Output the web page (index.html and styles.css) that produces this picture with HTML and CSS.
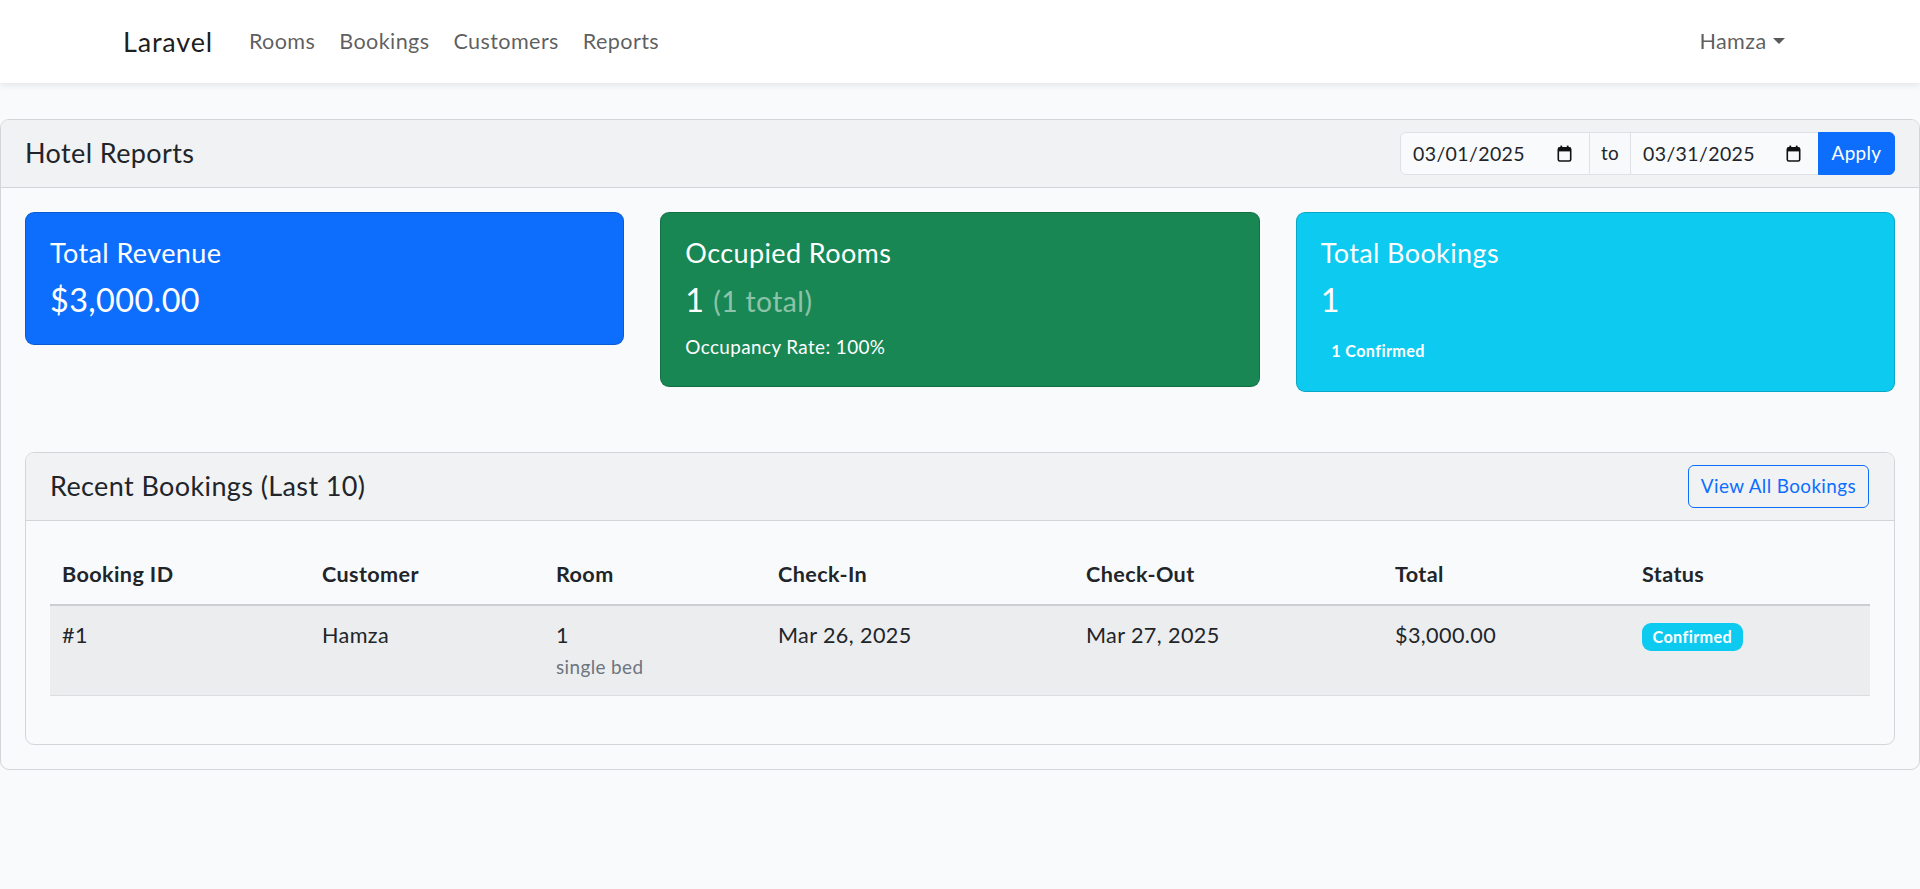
FILE: index.html
```html
<!DOCTYPE html>
<html lang="en">
<head>
<meta charset="utf-8">
<title>Hotel Reports</title>
<link rel="stylesheet" href="styles.css">
</head>
<body>
<nav class="navbar">
  <div class="nav-container">
    <a class="brand" href="#">Laravel</a>
    <ul class="nav-links">
      <li><a class="nav-link" href="#">Rooms</a></li>
      <li><a class="nav-link" href="#">Bookings</a></li>
      <li><a class="nav-link" href="#">Customers</a></li>
      <li><a class="nav-link" href="#">Reports</a></li>
    </ul>
    <div class="nav-user">
      <a class="nav-link dropdown-toggle" href="#">Hamza</a>
    </div>
  </div>
</nav>

<main class="main">
  <div class="card">
    <div class="card-header header-flex">
      <h5 class="header-title">Hotel Reports</h5>
      <form class="date-group">
        <div class="date-input first">
          <span>03/01/2025</span>
          <svg class="cal-icon" width="15" height="17" viewBox="0 0 15 17"><rect x="1.3" y="2.8" width="12.4" height="13.2" rx="1.6" fill="none" stroke="#111" stroke-width="1.6"/><rect x="1.3" y="2.8" width="12.4" height="3.6" fill="#111"/><rect x="3.4" y="0.6" width="1.8" height="3" fill="#111"/><rect x="9.8" y="0.6" width="1.8" height="3" fill="#111"/></svg>
        </div>
        <span class="group-text">to</span>
        <div class="date-input second">
          <span>03/31/2025</span>
          <svg class="cal-icon" width="15" height="17" viewBox="0 0 15 17"><rect x="1.3" y="2.8" width="12.4" height="13.2" rx="1.6" fill="none" stroke="#111" stroke-width="1.6"/><rect x="1.3" y="2.8" width="12.4" height="3.6" fill="#111"/><rect x="3.4" y="0.6" width="1.8" height="3" fill="#111"/><rect x="9.8" y="0.6" width="1.8" height="3" fill="#111"/></svg>
        </div>
        <button type="button" class="btn-apply">Apply</button>
      </form>
    </div>

    <div class="card-body">
      <div class="stats-row">
        <div class="stat-card bg-primary">
          <h5 class="stat-title">Total Revenue</h5>
          <h4 class="stat-value">$3,000.00</h4>
        </div>
        <div class="stat-card bg-success">
          <h5 class="stat-title">Occupied Rooms</h5>
          <h4 class="stat-value spaced">1 <small class="total-muted">(1 total)</small></h4>
          <p class="stat-note">Occupancy Rate: 100%</p>
        </div>
        <div class="stat-card bg-info">
          <h5 class="stat-title">Total Bookings</h5>
          <h4 class="stat-value spaced">1</h4>
          <div class="badge-line"><span class="badge badge-info">1 Confirmed</span></div>
        </div>
      </div>

      <div class="card inner-card">
        <div class="card-header header-flex inner-header">
          <h5 class="header-title">Recent Bookings (Last 10)</h5>
          <a class="btn-outline" href="#">View All Bookings</a>
        </div>
        <div class="card-body">
          <table class="table">
            <colgroup>
              <col class="c-id"><col class="c-cust"><col class="c-room"><col class="c-in"><col class="c-out"><col class="c-total"><col class="c-status">
            </colgroup>
            <thead>
              <tr>
                <th>Booking ID</th>
                <th>Customer</th>
                <th>Room</th>
                <th>Check-In</th>
                <th>Check-Out</th>
                <th>Total</th>
                <th>Status</th>
              </tr>
            </thead>
            <tbody>
              <tr>
                <td>#1</td>
                <td>Hamza</td>
                <td>1<small class="room-type">single bed</small></td>
                <td>Mar 26, 2025</td>
                <td>Mar 27, 2025</td>
                <td>$3,000.00</td>
                <td><span class="badge badge-info">Confirmed</span></td>
              </tr>
            </tbody>
          </table>
        </div>
      </div>
    </div>
  </div>
</main>
</body>
</html>
```

FILE: styles.css
```css
* {
  box-sizing: border-box;
}

html, body {
  margin: 0;
  padding: 0;
}

body {
  font-family: "Lato", "Nunito", "Noto Sans", sans-serif;
  font-size: 21.6px;
  line-height: 1.6;
  letter-spacing: 0.018em;
  color: #212529;
  background: #f8fafc;
}

a {
  text-decoration: none;
}

/* ---------- Navbar ---------- */
.navbar {
  background: #fff;
  box-shadow: 0 3px 6px rgba(0, 0, 0, 0.075);
  padding: 12px 0;
  position: relative;
  z-index: 2;
}

.nav-container {
  width: 1710px;
  margin: 0 auto;
  padding: 0 18px;
  display: flex;
  align-items: center;
}

.brand {
  font-size: 27px;
  line-height: 1.6;
  padding: 7.7px 0;
  margin-right: 24px;
  letter-spacing: 0.03em;
  color: rgba(0, 0, 0, 0.9);
}

.nav-links {
  display: flex;
  list-style: none;
  margin: 0;
  padding: 0;
}

.nav-link {
  display: block;
  padding: 12px;
  color: rgba(0, 0, 0, 0.65);
  line-height: 34.56px;
}

.nav-user {
  margin-left: auto;
}

.dropdown-toggle::after {
  content: "";
  display: inline-block;
  margin-left: 0.3em;
  vertical-align: 0.255em;
  border-top: 0.3em solid;
  border-right: 0.28em solid transparent;
  border-left: 0.28em solid transparent;
}

/* ---------- Layout ---------- */
.main {
  padding: 36px 0;
}

.card {
  background: #f8fafc;
  border: 1px solid #d3d5d8;
  border-radius: 9px;
  overflow: hidden;
}

.card-header {
  background: #f1f2f4;
  border-bottom: 1px solid #d3d5d8;
  padding: 12px 24px;
}

.header-flex {
  display: flex;
  align-items: center;
  justify-content: space-between;
}

.header-title {
  margin: 0;
  font-size: 27px;
  font-weight: 400;
  line-height: 1.2;
  color: #212529;
}

.card-body {
  padding: 24px;
}

/* ---------- Date filter ---------- */
.date-group {
  display: flex;
  align-items: stretch;
  height: 43.4px;
  font-size: 18.9px;
  line-height: 1.5;
}

.date-input {
  display: flex;
  align-items: center;
  justify-content: space-between;
  padding: 0 17px 0 12px;
  border: 1px solid #dee2e6;
  background: #f8fafc;
  color: #212529;
  font-size: 19.5px;
}

.date-input.first {
  width: 190px;
  border-radius: 6px 0 0 6px;
}

.date-input.second {
  width: 189px;
  margin-left: -1px;
}

.cal-icon {
  display: block;
}

.group-text {
  display: flex;
  align-items: center;
  justify-content: center;
  width: 42px;
  margin-left: -1px;
  border: 1px solid #dee2e6;
  background: #f8f9fa;
  color: #212529;
}

.btn-apply {
  width: 77px;
  margin-left: -1px;
  border: 1px solid #0d6efd;
  background: #0d6efd;
  color: #fff;
  font-family: inherit;
  font-size: 18.9px;
  letter-spacing: 0.018em;
  line-height: 1.5;
  padding: 0;
  border-radius: 0 6px 6px 0;
}

/* ---------- Stat cards ---------- */
.stats-row {
  display: grid;
  grid-template-columns: repeat(3, 1fr);
  gap: 36px;
  align-items: start;
  margin-bottom: 60px;
}

.stat-card {
  border: 1px solid rgba(0, 0, 0, 0.175);
  border-radius: 9px;
  padding: 24px;
  color: #fff;
}

.bg-primary {
  background: #0d6efd;
}

.bg-success {
  background: #198754;
}

.bg-info {
  background: #0dcaf0;
}

.stat-title {
  margin: 0 0 12px;
  font-size: 27px;
  font-weight: 400;
  line-height: 1.2;
}

.stat-value {
  margin: 0;
  font-size: 32.4px;
  font-weight: 400;
  line-height: 1.2;
}

.stat-value.spaced {
  margin-bottom: 12px;
}

.total-muted {
  font-size: 0.875em;
  color: rgba(255, 255, 255, 0.5);
}

.stat-note {
  margin: 0;
  font-size: 18.9px;
  line-height: 1.6;
}

.badge-line {
  line-height: 34.56px;
}

.badge {
  display: inline-block;
  font-size: 16.2px;
  font-weight: 700;
  line-height: 1;
  padding: 5.7px 10.5px;
  border-radius: 9px;
  color: #fff;
  vertical-align: baseline;
  white-space: nowrap;
}

.badge-info {
  background: #0dcaf0;
}

/* ---------- Recent bookings ---------- */
.inner-card {
  border-radius: 9px;
}

.inner-header {
  padding: 12px 24px;
}

.btn-outline {
  display: inline-block;
  border: 1px solid #0d6efd;
  color: #0d6efd;
  font-size: 18.9px;
  line-height: 1.5;
  padding: 6.5px 12px;
  border-radius: 6px;
  margin-right: 1px;
}

.table {
  width: 100%;
  border-collapse: collapse;
  table-layout: fixed;
  margin-bottom: 24px;
}

.c-id { width: 260px; }
.c-cust { width: 234px; }
.c-room { width: 222px; }
.c-in { width: 308px; }
.c-out { width: 309px; }
.c-total { width: 247px; }
.c-status { width: 240px; }

.table th,
.table td {
  padding: 12px;
  text-align: left;
  line-height: 34.56px;
  color: #212529;
}

.table th {
  font-weight: 700;
  vertical-align: bottom;
  background: #f8fafc;
  border-bottom: 2px solid #cbced2;
}

.table td {
  vertical-align: top;
  background: #ecedef;
  border-bottom: 1px solid #dcdee1;
}

.room-type {
  display: block;
  font-size: 18.9px;
  line-height: 30.24px;
  color: #6c757d;
}
```
